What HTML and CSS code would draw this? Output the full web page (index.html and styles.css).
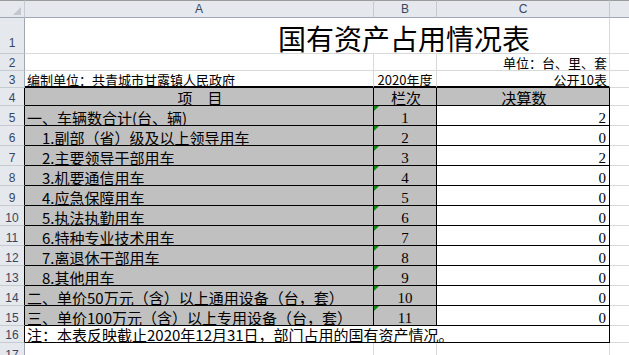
FILE: index.html
```html
<!DOCTYPE html>
<html lang="zh-CN">
<head>
<meta charset="utf-8">
<title>国有资产占用情况表</title>
<link rel="stylesheet" href="styles.css">
</head>
<body>
<div class="sheet">
  <div class="hd corner"><span class="selall"></span></div>
  <div class="hd colhead">A</div>
  <div class="hd colhead">B</div>
  <div class="hd colhead">C</div>
  <div class="hd colhead"></div>

  <div class="hd rowhead r1">1</div>
  <div class="c title span3">国有资产占用情况表</div>
  <div class="c"></div>

  <div class="hd rowhead">2</div>
  <div class="c"></div>
  <div class="c"></div>
  <div class="c sm right">单位：台、里、套</div>
  <div class="c"></div>

  <div class="hd rowhead">3</div>
  <div class="c sm r3">编制单位：共青城市甘露镇人民政府</div>
  <div class="c sm r3 center">2020年度</div>
  <div class="c sm r3 right">公开10表</div>
  <div class="c"></div>

  <div class="hd rowhead edge">4</div>
  <div class="c t g bk center">项　目</div>
  <div class="c t g bk center">栏次</div>
  <div class="c t g bk center">决算数</div>
  <div class="c"></div>

  <div class="hd rowhead edge">5</div>
  <div class="c t g bk">一、车辆数合计(台、辆)</div>
  <div class="c num g bk center flag">1</div>
  <div class="c num bk right">2</div>
  <div class="c"></div>

  <div class="hd rowhead edge">6</div>
  <div class="c t g bk">　1.副部（省）级及以上领导用车</div>
  <div class="c num g bk center flag">2</div>
  <div class="c num bk right">0</div>
  <div class="c"></div>

  <div class="hd rowhead edge">7</div>
  <div class="c t g bk">　2.主要领导干部用车</div>
  <div class="c num g bk center flag">3</div>
  <div class="c num bk right">2</div>
  <div class="c"></div>

  <div class="hd rowhead edge">8</div>
  <div class="c t g bk">　3.机要通信用车</div>
  <div class="c num g bk center flag">4</div>
  <div class="c num bk right">0</div>
  <div class="c"></div>

  <div class="hd rowhead edge">9</div>
  <div class="c t g bk">　4.应急保障用车</div>
  <div class="c num g bk center flag">5</div>
  <div class="c num bk right">0</div>
  <div class="c"></div>

  <div class="hd rowhead edge">10</div>
  <div class="c t g bk">　5.执法执勤用车</div>
  <div class="c num g bk center flag">6</div>
  <div class="c num bk right">0</div>
  <div class="c"></div>

  <div class="hd rowhead edge">11</div>
  <div class="c t g bk">　6.特种专业技术用车</div>
  <div class="c num g bk center flag">7</div>
  <div class="c num bk right">0</div>
  <div class="c"></div>

  <div class="hd rowhead edge">12</div>
  <div class="c t g bk">　7.离退休干部用车</div>
  <div class="c num g bk center flag">8</div>
  <div class="c num bk right">0</div>
  <div class="c"></div>

  <div class="hd rowhead edge">13</div>
  <div class="c t g bk">　8.其他用车</div>
  <div class="c num g bk center flag">9</div>
  <div class="c num bk right">0</div>
  <div class="c"></div>

  <div class="hd rowhead edge">14</div>
  <div class="c t g bk">二、单价50万元（含）以上通用设备（台，套）</div>
  <div class="c num g bk center flag">10</div>
  <div class="c num bk right">0</div>
  <div class="c"></div>

  <div class="hd rowhead edge">15</div>
  <div class="c t g bk">三、单价100万元（含）以上专用设备（台，套）</div>
  <div class="c num g bk center flag">11</div>
  <div class="c num bk right">0</div>
  <div class="c"></div>

  <div class="hd rowhead edge">16</div>
  <div class="c t bk span3">注：本表反映截止2020年12月31日，部门占用的国有资产情况。</div>
  <div class="c"></div>

  <div class="hd rowhead">17</div>
  <div class="c"></div>
  <div class="c"></div>
  <div class="c"></div>
  <div class="c"></div>
</div>
</body>
</html>
```

FILE: styles.css
```css
html, body {
  margin: 0;
  padding: 0;
  background: #fff;
  overflow: hidden;
}

.sheet {
  display: grid;
  grid-template-columns: 25px 349px 63px 173px 80px;
  grid-template-rows: 18px 36px 17px 17px 18px repeat(11, 20px) 17px 20px;
  width: 629px;
  height: 355px;
  overflow: hidden;
  font-family: "Noto Sans CJK SC", sans-serif;
  color: #000;
}

.sheet > div {
  box-sizing: border-box;
  border-right: 1px solid #d8d9db;
  border-bottom: 1px solid #d8d9db;
  display: flex;
  align-items: flex-end;
  overflow: hidden;
  white-space: nowrap;
  position: relative;
}

/* headers */
.sheet > .hd {
  background: #e5e8ed;
  font-family: "Liberation Sans", Arial, sans-serif;
  font-size: 12px;
  color: #37465f;
  justify-content: center;
}

.sheet > .colhead,
.sheet > .corner {
  border-top: 1px solid #9b9b9b;
  border-bottom-color: #9ea7b3;
  border-right-color: #c6cbd2;
  align-items: center;
  line-height: 14px;
}

.sheet > .rowhead {
  border-right-color: #9ea7b3;
  border-bottom-color: #c6cbd2;
  line-height: 14px;
}

.sheet > .rowhead.r1 {
  padding-bottom: 3px;
}

.sheet > .rowhead.edge {
  border-right-color: #000;
}

.selall {
  position: absolute;
  right: 3px;
  bottom: 2px;
  width: 0;
  height: 0;
  border-left: 8px solid transparent;
  border-bottom: 8px solid #c3c8cf;
}

/* cells */
.span3 {
  grid-column: span 3;
}

.title {
  font-size: 28px;
  line-height: 28px;
  padding-left: 253px;
  padding-bottom: 1px;
}

.sm {
  font-size: 13px;
  line-height: 13px;
  padding: 0 2px 1px 2px;
}

.sheet > .r3 {
  border-bottom: 2px solid #000;
  padding-bottom: 0;
}

.t {
  font-size: 15px;
  line-height: 15px;
  padding-left: 2px;
}

.num {
  font-family: "Liberation Serif", "Times New Roman", serif;
  font-size: 15px;
  line-height: 13px;
}

.num.right {
  padding-right: 3px;
}

.right {
  justify-content: flex-end;
}

.center {
  justify-content: center;
}

.g {
  background: #c0c0c0;
}

.sheet > .bk {
  border-right-color: #000;
  border-bottom-color: #000;
}

.flag::before {
  content: "";
  position: absolute;
  left: 0;
  top: 0;
  width: 0;
  height: 0;
  border-top: 5px solid #0b8a0b;
  border-right: 5px solid transparent;
}
```
